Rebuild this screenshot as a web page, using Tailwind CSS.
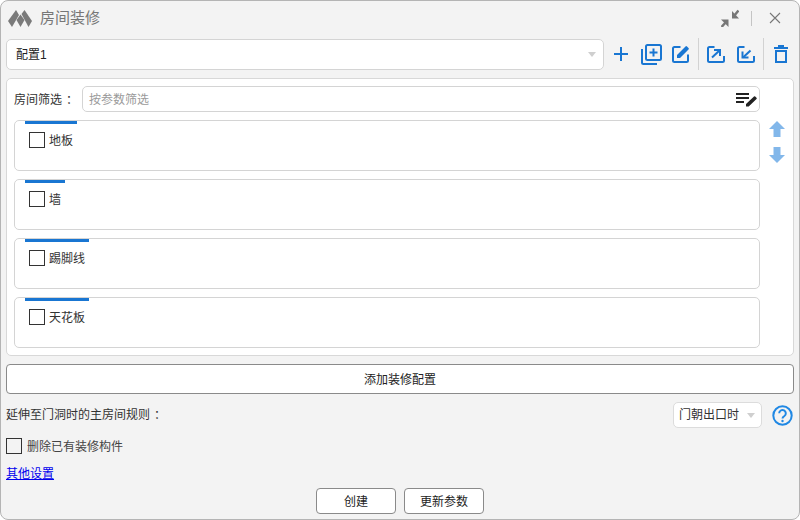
<!DOCTYPE html>
<html lang="zh-CN">
<head>
  <meta charset="UTF-8">
  <title>房间装修</title>
  <script src="https://cdn.jsdelivr.net/npm/@tailwindcss/browser@4"></script>
</head>
<body class="w-[800px] h-[520px] overflow-hidden bg-white">
  <div class="w-[800px] h-[520px] flex flex-col bg-[#f3f3f3] border border-[#b4b4b4] rounded-[8px] overflow-hidden text-[12px] text-[#333] font-['Liberation_Sans','Noto_Sans_CJK_SC',sans-serif]">
    <!-- title bar -->
    <div class="h-[37px] shrink-0 flex items-center pl-[7px] pr-[18px] pb-[3px]">
      <svg class="w-[24px] h-[17px]" viewBox="0 0 24 17" fill="#7a7a7a">
        <path d="M0 11 L8 0 L11 5 L4 17 Z"/>
        <path d="M8.5 10 L12.5 4.5 L16.5 10 L12.5 17 Z"/>
        <path d="M13.5 4 L16.5 0 L24 11 L20.5 17 Z"/>
      </svg>
      <span class="ml-[8px] text-[15px] text-[#777]">房间装修</span>
      <div class="ml-auto flex items-center">
        <svg class="w-[18px] h-[18px]" viewBox="0 0 18 18" fill="#777">
          <path d="M11 2 V9.5 H18 Z"/><path d="M13 7 L17.5 1.5" stroke="#777" stroke-width="2.5"/>
          <path d="M0 10.5 H7.5 V18 Z"/><path d="M5 13 L0.5 18" stroke="#777" stroke-width="2.5"/>
        </svg>
        <div class="w-px h-[15px] bg-[#c4c4c4] ml-[12px] mr-[17px]"></div>
        <svg class="w-[12px] h-[12px]" viewBox="0 0 12 12" fill="none" stroke="#777" stroke-width="1.1"><path d="M1 1 L11 11 M11 1 L1 11"/></svg>
      </div>
    </div>

    <div class="flex-1 flex flex-col px-[5px]">
      <!-- config row -->
      <div class="flex items-center h-[32px] shrink-0">
        <div class="w-[598px] h-[31px] flex items-center justify-between bg-white border border-[#d4d4d4] rounded-[5px] pl-[9px] pr-[7px] text-[#222]">
          <span class="pt-[1px]">配置1</span>
          <span class="w-0 h-0 border-x-[4px] border-x-transparent border-t-[5px] border-t-[#cfcfcf]"></span>
        </div>
        <div class="flex items-center text-[#1976d2]">
          <svg class="w-[16px] h-[16px] ml-[9px]" viewBox="0 0 16 16" fill="none" stroke="currentColor" stroke-width="2"><path d="M8 1 V15 M1 8 H15"/></svg>
          <svg class="w-[21px] h-[21px] ml-[12px]" viewBox="0 0 21 21" fill="none" stroke="currentColor" stroke-width="2"><rect x="5" y="1" width="15" height="15" rx="1.5"/><path d="M1 5 V18.5 A1.5 1.5 0 0 0 2.5 20 H16"/><path d="M12.5 4.5 V12.5 M8.5 8.5 H16.5"/></svg>
          <svg class="w-[18px] h-[18px] ml-[10px]" viewBox="0 0 18 18" fill="none"><path d="M8.5 2 H2.5 A1.5 1.5 0 0 0 1 3.5 V15.5 A1.5 1.5 0 0 0 2.5 17 H14.5 A1.5 1.5 0 0 0 16 15.5 V9.5" stroke="currentColor" stroke-width="2"/><path d="M5 13 V10 L13.5 1.5 A1 1 0 0 1 15 1.5 L16.5 3 A1 1 0 0 1 16.5 4.5 L8 13 Z" fill="currentColor"/></svg>
          <div class="w-px h-[32px] bg-[#d2d2d2] ml-[8px]"></div>
          <svg class="w-[18px] h-[18px] ml-[8px]" viewBox="0 0 18 18" fill="none" stroke="currentColor" stroke-width="2"><path d="M7.5 2 H2.5 A1.5 1.5 0 0 0 1 3.5 V15.5 A1.5 1.5 0 0 0 2.5 17 H15.5 A1.5 1.5 0 0 0 17 15.5 V11"/><path d="M5 12.5 L12.5 5.5"/><path d="M7 5 H13 V11"/></svg>
          <svg class="w-[18px] h-[18px] ml-[12px]" viewBox="0 0 18 18" fill="none" stroke="currentColor" stroke-width="2"><path d="M7.5 2 H2.5 A1.5 1.5 0 0 0 1 3.5 V15.5 A1.5 1.5 0 0 0 2.5 17 H15.5 A1.5 1.5 0 0 0 17 15.5 V11"/><path d="M13.5 5.5 L6 12.5"/><path d="M5.5 6.5 V12.5 H11.5"/></svg>
          <div class="w-px h-[32px] bg-[#d2d2d2] ml-[8px]"></div>
          <svg class="w-[14px] h-[18px] ml-[10px]" viewBox="0 0 14 18" fill="none" stroke="currentColor" stroke-width="2"><path d="M0 3 H14"/><path d="M4 1 H10"/><path d="M2 6 H12 V17 H2 Z"/></svg>
        </div>
      </div>

      <!-- main panel -->
      <div class="mt-[8px] h-[278px] shrink-0 bg-white border border-[#d8d8d8] rounded-[5px] flex pt-[7px] pl-[7px]">
        <div class="w-[746px] flex flex-col">
          <div class="flex items-center h-[26px]">
            <span class="w-[68px] pt-[1px] text-[#333]">房间筛选<span class="inline-block translate-x-[4px]">：</span></span>
            <div class="flex-1 h-[26px] flex items-center justify-between border border-[#d4d4d4] rounded-[5px] pl-[6px] pr-[1px] text-[#9a9a9a]">
              <span class="pt-[1px]">按参数筛选</span>
              <svg class="w-[22px] h-[15px]" viewBox="0 0 22 15"><path d="M0 2 H13 M0 6 H13 M0 10 H8" stroke="#222" stroke-width="1.8" fill="none"/><path d="M10 14.5 V12 L18 4.5 A0.8 0.8 0 0 1 19.2 4.5 L20.5 5.8 A0.8 0.8 0 0 1 20.5 7 L12.7 14.5 Z" fill="#222"/></svg>
            </div>
          </div>
          <div class="mt-[8px] flex flex-col gap-[8px]">
            <div class="relative h-[51px] border border-[#d4d4d4] rounded-[5px] pl-[14px] pt-[9px]">
              <div class="absolute left-[10px] top-0 w-[52px] h-[3px] bg-[#1976d2]"></div>
              <label class="flex items-center gap-[4px]"><span class="w-[16px] h-[16px] border border-[#333] bg-white"></span><span class="pt-[2px]">地板</span></label>
            </div>
            <div class="relative h-[51px] border border-[#d4d4d4] rounded-[5px] pl-[14px] pt-[9px]">
              <div class="absolute left-[10px] top-0 w-[40px] h-[3px] bg-[#1976d2]"></div>
              <label class="flex items-center gap-[4px]"><span class="w-[16px] h-[16px] border border-[#333] bg-white"></span><span class="pt-[2px]">墙</span></label>
            </div>
            <div class="relative h-[51px] border border-[#d4d4d4] rounded-[5px] pl-[14px] pt-[9px]">
              <div class="absolute left-[10px] top-0 w-[64px] h-[3px] bg-[#1976d2]"></div>
              <label class="flex items-center gap-[4px]"><span class="w-[16px] h-[16px] border border-[#333] bg-white"></span><span class="pt-[2px]">踢脚线</span></label>
            </div>
            <div class="relative h-[51px] border border-[#d4d4d4] rounded-[5px] pl-[14px] pt-[9px]">
              <div class="absolute left-[10px] top-0 w-[64px] h-[3px] bg-[#1976d2]"></div>
              <label class="flex items-center gap-[4px]"><span class="w-[16px] h-[16px] border border-[#333] bg-white"></span><span class="pt-[2px]">天花板</span></label>
            </div>
          </div>
        </div>
        <div class="flex flex-col items-center ml-[9px] pt-[35px] gap-[10px]">
          <svg class="w-[16px] h-[16px]" viewBox="0 0 16 16" fill="#82b7ea"><path d="M8 0 L16 8 H11.5 V16 H4.5 V8 H0 Z"/></svg>
          <svg class="w-[16px] h-[16px]" viewBox="0 0 16 16" fill="#82b7ea"><path d="M8 16 L16 8 H11.5 V0 H4.5 V8 H0 Z"/></svg>
        </div>
      </div>

      <!-- add button -->
      <button class="mt-[8px] h-[30px] shrink-0 pt-[2px] bg-white border border-[#8a8a8a] rounded-[4px] text-[#222] text-[12px]">添加装修配置</button>

      <!-- rule row -->
      <div class="mt-[8px] h-[26px] shrink-0 flex items-center">
        <span>延伸至门洞时的主房间规则<span class="inline-block translate-x-[4px]">：</span></span>
        <div class="ml-auto w-[89px] h-[26px] flex items-center justify-between bg-white border border-[#dcdcdc] rounded-[5px] pl-[5px] pr-[6px] mr-[10px]">
          <span>门朝出口时</span>
          <span class="w-0 h-0 border-x-[4px] border-x-transparent border-t-[5px] border-t-[#cfcfcf]"></span>
        </div>
        <svg class="w-[21px] h-[21px] mr-[1px]" viewBox="0 0 21 21" fill="none"><circle cx="10.5" cy="10.5" r="9.2" stroke="#2088e4" stroke-width="2"/><path d="M7.2 8.3 A3.3 3.3 0 1 1 12.4 11 C11 11.9 10.5 12.4 10.5 13.6" stroke="#2088e4" stroke-width="2"/><circle cx="10.5" cy="16" r="1.2" fill="#2088e4"/></svg>
      </div>

      <!-- delete existing -->
      <label class="mt-[10px] flex items-center gap-[5px] h-[16px] shrink-0 text-[#444]"><span class="w-[16px] h-[16px] border border-[#333] bg-[#f3f3f3]"></span><span class="pt-[2px]">删除已有装修构件</span></label>

      <a href="#" class="mt-[12px] w-fit text-[#0000ee] underline leading-[16px]">其他设置</a>

      <!-- footer -->
      <div class="mt-[6px] flex justify-center gap-[8px]">
        <button class="w-[80px] h-[26px] pt-[2px] bg-white border border-[#8a8a8a] rounded-[4px] text-[12px] text-[#222]">创建</button>
        <button class="w-[80px] h-[26px] pt-[2px] bg-white border border-[#8a8a8a] rounded-[4px] text-[12px] text-[#222]">更新参数</button>
      </div>
    </div>
  </div>
</body>
</html>
